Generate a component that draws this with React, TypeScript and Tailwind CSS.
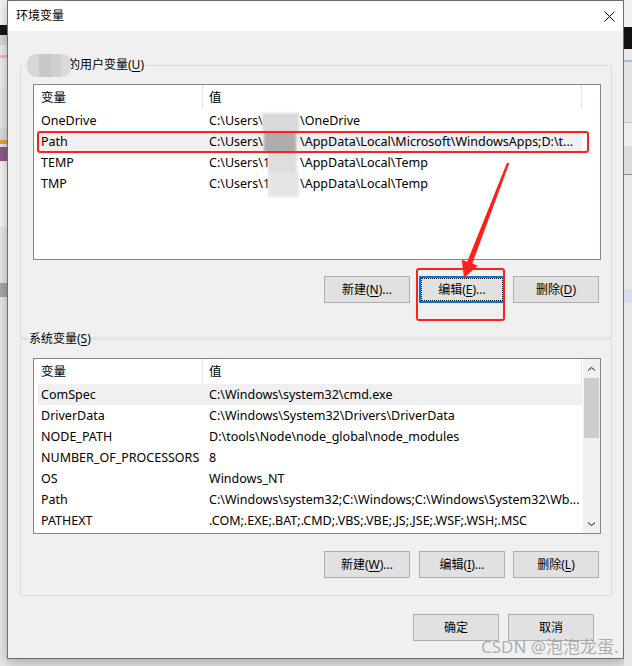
import React from "react";

type Row = { name: string; prefix?: string; value: string };

const userRows: Row[] = [
  { name: "OneDrive", prefix: "C:\\Users\\", value: "\\OneDrive" },
  { name: "Path", prefix: "C:\\Users\\", value: "\\AppData\\Local\\Microsoft\\WindowsApps;D:\\t..." },
  { name: "TEMP", prefix: "C:\\Users\\1", value: "\\AppData\\Local\\Temp" },
  { name: "TMP", prefix: "C:\\Users\\1", value: "\\AppData\\Local\\Temp" },
];

const sysRows: Row[] = [
  { name: "ComSpec", value: "C:\\Windows\\system32\\cmd.exe" },
  { name: "DriverData", value: "C:\\Windows\\System32\\Drivers\\DriverData" },
  { name: "NODE_PATH", value: "D:\\tools\\Node\\node_global\\node_modules" },
  { name: "NUMBER_OF_PROCESSORS", value: "8" },
  { name: "OS", value: "Windows_NT" },
  { name: "Path", value: "C:\\Windows\\system32;C:\\Windows;C:\\Windows\\System32\\Wb..." },
  { name: "PATHEXT", value: ".COM;.EXE;.BAT;.CMD;.VBS;.VBE;.JS;.JSE;.WSF;.WSH;.MSC" },
];

function Btn({ children, focused }: { children: React.ReactNode; focused?: boolean }) {
  return (
    <div
      className={
        focused
          ? "relative w-[86px] h-[27px] border-2 border-[#0078d7] bg-[#e1e1e1] flex items-center justify-center text-[12px] text-black"
          : "relative w-[86px] h-[27px] border border-[#adadad] bg-[#e1e1e1] flex items-center justify-center text-[12px] text-black"
      }
    >
      {focused && <div className="absolute inset-0 border border-dotted border-black" />}
      <span className="relative">{children}</span>
    </div>
  );
}

function U({ c }: { c: string }) {
  return <u className="underline underline-offset-[2px] decoration-1">{c}</u>;
}

function Chevron({ down }: { down?: boolean }) {
  return (
    <svg width="9" height="6" viewBox="0 0 9 6">
      <path
        d={down ? "M1 1.5 L4.5 4.5 L8 1.5" : "M1 4.5 L4.5 1.5 L8 4.5"}
        fill="none"
        stroke="#606060"
        strokeWidth="1.1"
      />
    </svg>
  );
}

function VarList({ rows, highlight, scrollbar }: { rows: Row[]; highlight: number; scrollbar?: boolean }) {
  return (
    <div className="w-[568px] h-[176px] border border-[#828790] bg-white flex overflow-hidden">
      <div className="w-[548px] flex flex-col">
        <div className="flex h-[25px] leading-[25px] text-[12.5px] text-black">
          <div className="w-[169px] pl-[7px] border-r border-[#e5e5e5]">变量</div>
          <div className="w-[379px] pl-[6px] border-r border-[#e5e5e5]">值</div>
        </div>
        <div className="ml-[4px] w-[544px] flex flex-col">
          {rows.map((r, i) => (
            <div
              key={r.name + i}
              className={
                i === highlight
                  ? "flex h-[21px] leading-[21px] text-[12.5px] text-black bg-[#f0f0f0]"
                  : "flex h-[21px] leading-[21px] text-[12.5px] text-black"
              }
            >
              <div className="w-[168px] pl-[3px] whitespace-nowrap">{r.name}</div>
              <div className="flex-1 pl-[3px] whitespace-nowrap overflow-hidden">
                {r.prefix && <span className="inline-block w-[91px]">{r.prefix}</span>}
                {r.value}
              </div>
            </div>
          ))}
        </div>
      </div>
      {scrollbar && (
        <div className="w-[17px] ml-px bg-[#f0f0f0] flex flex-col items-center">
          <div className="h-[17px] w-full flex items-center justify-center pt-[3px]">
            <Chevron />
          </div>
          <div className="mt-[2px] w-[15px] h-[60px] bg-[#cdcdcd]" />
          <div className="flex-1" />
          <div className="h-[17px] w-full flex items-center justify-center pb-[1px]">
            <Chevron down />
          </div>
        </div>
      )}
    </div>
  );
}

export default function App() {
  return (
    <div className="relative w-[632px] h-[666px] overflow-hidden bg-[#e4e4e4] flex font-['Noto_Sans','Noto_Sans_CJK_SC',sans-serif]">
      {/* left background strip (other app behind) */}
      <div className="w-[7px] flex flex-col bg-[#e9e9e9]">
        <div className="h-[25px] bg-[#f3f3f3]" />
        <div className="h-[10px] bg-[#161616]" />
        <div className="h-[10px] bg-[#d6d6d6]" />
        <div className="h-[10px] bg-[#eaeaea]" />
        <div className="h-[3px] bg-[#f4b4b4]" />
        <div className="h-[30px] bg-[#ececec]" />
        <div className="h-[40px] bg-[#e6e6e6]" />
        <div className="h-[12px] bg-[#dadada]" />
        <div className="h-[4px] bg-[#e8a03c]" />
        <div className="h-[3px] bg-[#e6e6e6]" />
        <div className="h-[14px] bg-[#8c5b86]" />
        <div className="h-[6px] bg-[#f2f2f2]" />
        <div className="h-[60px] bg-[#f5f5f5]" />
        <div className="h-[56px] bg-[#e7e7e7]" />
        <div className="h-[14px] bg-[#a6a6a6]" />
        <div className="flex-1 bg-[#e6e6e6]" />
      </div>

      {/* dialog window */}
      <div className="w-[617px] h-[659px] border border-[#6f6f6f] flex flex-col shadow-[0_3px_10px_rgba(0,0,0,0.28)] shrink-0">
        <div className="h-[30px] bg-white flex items-center justify-between pl-[8px] pr-[8px]">
          <span className="text-[12px] text-black leading-[16px]">环境变量</span>
          <svg width="11" height="11" viewBox="0 0 11 11">
            <path d="M0.5 0.5 L10.5 10.5 M10.5 0.5 L0.5 10.5" stroke="#000" strokeWidth="1" />
          </svg>
        </div>

        <div className="flex-1 bg-[#f0f0f0] pt-[34px] pl-[12px] pr-[11px] flex flex-col">
          {/* user variables group */}
          <div className="relative h-[273px] border border-[#dcdcdc] pt-[18px] pl-[12px] pr-[12px] flex flex-col">
            <div className="absolute left-[6px] top-[-10px] h-[18px] leading-[18px] px-[1px] bg-[#f0f0f0] text-[12px] text-black whitespace-nowrap">
              <span className="inline-block w-[40px]" />的用户变量(<U c="U" />)
              <div className="absolute left-0 top-[-2px] w-[44px] h-[23px] rounded-[9px] overflow-hidden flex blur-[0.6px]">
                <div className="w-[12px] bg-[#d6d6d6]" />
                <div className="w-[12px] bg-[#c8c8c8]" />
                <div className="w-[10px] bg-[#cfcfcf]" />
                <div className="w-[10px] bg-[#dadada]" />
              </div>
            </div>
            <div className="relative">
              <VarList rows={userRows} highlight={1} />
              {/* blurred user name */}
              <div className="absolute left-[229px] top-[29px] w-[37px] h-[84px] flex flex-col blur-[1px]">
                <div className="h-[19px] bg-[#d9d9d9]" />
                <div className="h-[20px] ml-[2px] mr-[3px] bg-[#adadad]" />
                <div className="h-[21px] ml-[6px] mr-[2px] bg-[#dedede]" />
                <div className="h-[24px] ml-[6px] bg-[#e6e6e6]" />
              </div>
            </div>
            <div className="mt-[16px] flex justify-end">
              <Btn>
                新建(<U c="N" />)...
              </Btn>
              <div className="ml-[9px]">
                <Btn focused>
                  编辑(<U c="E" />)...
                </Btn>
              </div>
              <div className="ml-[8px]">
                <Btn>
                  删除(<U c="D" />)
                </Btn>
              </div>
            </div>
          </div>

          {/* system variables group */}
          <div className="relative mt-px h-[257px] border border-[#dcdcdc] pt-[18px] pl-[12px] pr-[12px] flex flex-col">
            <div className="absolute left-[7px] top-[-10px] h-[18px] leading-[18px] px-[1px] bg-[#f0f0f0] text-[12px] text-black whitespace-nowrap">
              系统变量(<U c="S" />)
            </div>
            <VarList rows={sysRows} highlight={0} scrollbar />
            <div className="mt-[17px] flex justify-end">
              <Btn>
                新建(<U c="W" />)...
              </Btn>
              <div className="ml-[9px]">
                <Btn>
                  编辑(<U c="I" />)...
                </Btn>
              </div>
              <div className="ml-[8px]">
                <Btn>
                  删除(<U c="L" />)
                </Btn>
              </div>
            </div>
          </div>

          <div className="mt-[18px] pr-[18px] flex justify-end">
            <Btn>确定</Btn>
            <div className="ml-[9px]">
              <Btn>取消</Btn>
            </div>
          </div>
        </div>
      </div>

      {/* right background strip */}
      <div className="w-[8px] flex flex-col bg-[#e6e6e6]">
        <div className="h-[27px] bg-[#f1f1f1]" />
        <div className="h-[22px] bg-[#111111]" />
        <div className="h-[11px] bg-[#e9e9e9]" />
        <div className="h-[2px] bg-[#a9bcd6]" />
        <div className="h-[60px] bg-[#e3e3e3]" />
        <div className="h-px bg-[#c4c4c4]" />
        <div className="h-[23px] bg-[#eeeeee]" />
        <div className="h-[28px] bg-[#dcdcdc]" />
        <div className="h-px bg-[#8a8a8a]" />
        <div className="h-[114px] bg-[#e8e8e8]" />
        <div className="h-[14px] bg-[#dcdcf0]" />
        <div className="flex-1 bg-[#e8e8e8]" />
      </div>

      {/* annotations */}
      <div className="absolute left-[37px] top-[131px] w-[552px] h-[22px] border-2 border-[#ff1f1f] rounded-[3px]" />
      <div className="absolute left-[416px] top-[268px] w-[89px] h-[53px] border-2 border-[#ff1f1f] rounded-[3px]" />
      <svg className="absolute left-0 top-0 pointer-events-none" width="632" height="666" viewBox="0 0 632 666">
        <polygon
          points="507.1,162.6 509.2,163.6 472.3,263.5 477.6,265.8 464,278 461.8,259.8 467.2,261.8"
          fill="#ff1f1f"
        />
      </svg>
      <div className="absolute left-[481px] top-[637px] text-[17px] leading-[20px] text-[rgba(150,150,150,0.75)] whitespace-nowrap">
        CSDN @泡泡龙蛋.
      </div>
    </div>
  );
}
